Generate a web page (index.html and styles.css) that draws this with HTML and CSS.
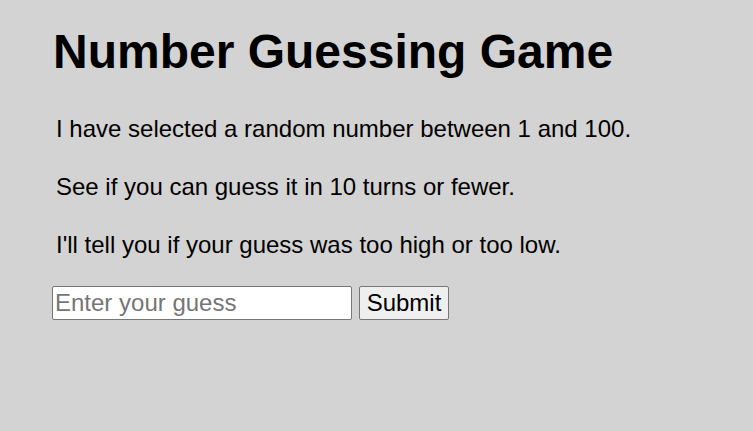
FILE: index.html
```html
<!DOCTYPE html>
<html lang="en">
<head>
<meta charset="utf-8">
<title>Number guessing game</title>
<link rel="stylesheet" href="styles.css">
</head>
<body>
<main class="game">
  <h1 class="title">Number Guessing Game</h1>
  <p class="text">I have selected a random number between 1 and 100.</p>
  <p class="text">See if you can guess it in 10 turns or fewer.</p>
  <p class="text">I'll tell you if your guess was too high or too low.</p>
  <form class="guess-form">
    <input class="guess-field" type="text" placeholder="Enter your guess">
    <button class="guess-submit" type="button">Submit</button>
  </form>
</main>
</body>
</html>
```
FILE: styles.css
```css
html {
  background: #d3d3d3;
  font-family: "Liberation Sans", Arial, sans-serif;
}
body {
  margin: 0;
  padding: 0 52px;
  color: #000;
}
.title {
  font-size: 48px;
  font-weight: bold;
  line-height: 55px;
  margin: 24px 0 33px 1px;
}
.text {
  font-size: 24px;
  line-height: 34px;
  margin: 24px 0 0 4px;
}
.guess-form {
  display: flex;
  align-items: center;
  gap: 7px;
  margin-top: 24px;
}
.guess-field {
  box-sizing: border-box;
  width: 300px;
  height: 34px;
  font-family: inherit;
  font-size: 24px;
  padding: 1px 2px;
  border: 1px solid #767676;
  border-radius: 2px;
  background: #fff;
  margin: 0;
}
.guess-field::placeholder {
  color: #757575;
}
.guess-submit {
  box-sizing: border-box;
  height: 34px;
  width: 90px;
  font-family: inherit;
  font-size: 24px;
  padding: 0 6px;
  border: 1px solid #767676;
  border-radius: 2px;
  background: #efefef;
  color: #000;
  margin: 0;
}
```
